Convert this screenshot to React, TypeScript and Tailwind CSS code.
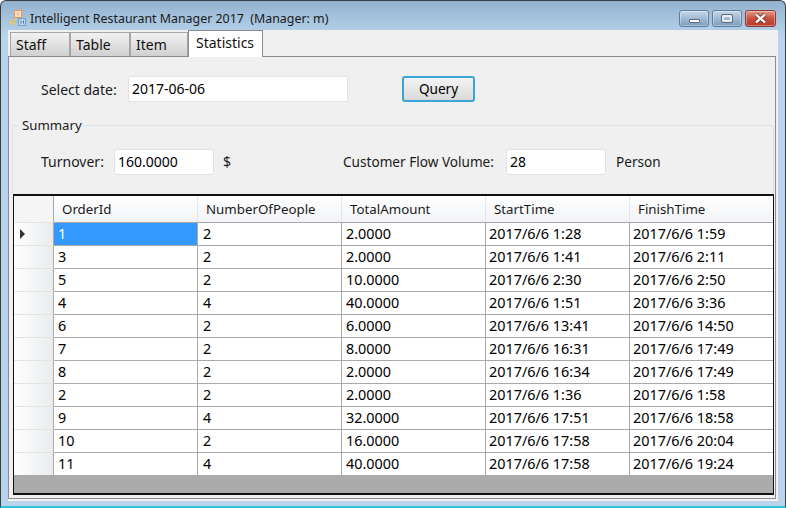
import React from "react";

const columns = ["OrderId", "NumberOfPeople", "TotalAmount", "StartTime", "FinishTime"];

const rows = [
  ["1", "2", "2.0000", "2017/6/6 1:28", "2017/6/6 1:59"],
  ["3", "2", "2.0000", "2017/6/6 1:41", "2017/6/6 2:11"],
  ["5", "2", "10.0000", "2017/6/6 2:30", "2017/6/6 2:50"],
  ["4", "4", "40.0000", "2017/6/6 1:51", "2017/6/6 3:36"],
  ["6", "2", "6.0000", "2017/6/6 13:41", "2017/6/6 14:50"],
  ["7", "2", "8.0000", "2017/6/6 16:31", "2017/6/6 17:49"],
  ["8", "2", "2.0000", "2017/6/6 16:34", "2017/6/6 17:49"],
  ["2", "2", "2.0000", "2017/6/6 1:36", "2017/6/6 1:58"],
  ["9", "4", "32.0000", "2017/6/6 17:51", "2017/6/6 18:58"],
  ["10", "2", "16.0000", "2017/6/6 17:58", "2017/6/6 20:04"],
  ["11", "4", "40.0000", "2017/6/6 17:58", "2017/6/6 19:24"],
];

// left padding per column, the first three sit a bit further in
const cellPad = ["pl-[4px]", "pl-[5px]", "pl-[4px]", "pl-[3px]", "pl-[3px]"];

const AppIcon = () => (
  <svg width="17" height="18" viewBox="0 0 17 18" className="shrink-0">
    <rect x="5.5" y="0.5" width="7" height="7" fill="#f7e2d2" stroke="#ee9350" />
    <path d="M9 2.5v3" stroke="#ee9350" />
    <path d="M1.5 9v6M5.5 9v6" stroke="#f5c84a" strokeWidth="1.4" />
    <path d="M1.5 12h4" stroke="#f5c84a" />
    <rect x="9.5" y="8.5" width="7" height="7" fill="#bcd6ee" stroke="#6f9fd0" />
    <path d="M12 10.5v3M14.5 10.5v3" stroke="#3f74ad" />
    <path d="M6 12h3" stroke="#a9b6c4" />
  </svg>
);

const WindowButton = ({ children, className }: { children: React.ReactNode; className: string }) => (
  <div className={`flex h-[17px] items-center justify-center rounded-[3px] border shadow-[inset_0_0_0_1px_rgba(255,255,255,0.35)] ${className}`}>
    {children}
  </div>
);

const Tab = ({ label, active, className }: { label: string; active?: boolean; className?: string }) =>
  active ? (
    <div className="z-10 -mb-px flex h-[27px] w-[75px] items-start border border-b-0 border-[#898c95] bg-white pl-[7px] pt-[5px] text-[#111]">
      {label}
    </div>
  ) : (
    <div className={`mt-[2px] flex h-[24px] items-center border border-b-0 border-[#a5a5a5] bg-gradient-to-b from-[#f2f2f2] to-[#d0d0d0] pl-[5px] text-[#111] ${className}`}>
      {label}
    </div>
  );

const Field = ({ value, className }: { value: string; className: string }) => (
  <div className={`flex h-[26px] items-center rounded-[2px] border border-[#dfe3e8] bg-white pl-[3px] text-black ${className}`}>
    {value}
  </div>
);

export default function App() {
  return (
    <div
      className="flex h-[508px] w-[786px] flex-col overflow-hidden rounded-t-[6px] border border-b-2 border-[#3a3f46] border-b-[#2fc4d8] bg-gradient-to-b from-[#93b2cf] from-0% via-[#b9d4ec] via-[7%] to-[#b9d4ec] px-[7px] pb-[5px] text-[14px] leading-none text-[#1a1a1a]"
      style={{ fontFamily: '"Noto Sans", sans-serif' }}
    >
      <div className="flex h-[29px] shrink-0 items-center pt-[7px]">
        <div className="ml-[1px] flex items-center gap-[4px] text-[12.4px]">
          <AppIcon />
          <span className="whitespace-pre">Intelligent Restaurant Manager 2017  (Manager: m)</span>
        </div>
        <div className="ml-auto mr-[2px] flex items-center gap-[3px] self-start pt-[2px]">
          <WindowButton className="w-[30px] border-[#5f7d9c] bg-gradient-to-b from-[#c6d8ea] to-[#7c9cbc]">
            <div className="mt-[5px] h-[4px] w-[11px] rounded-[1px] border border-[#5a6878] bg-white" />
          </WindowButton>
          <WindowButton className="w-[30px] border-[#5f7d9c] bg-gradient-to-b from-[#c6d8ea] to-[#7c9cbc]">
            <div className="h-[7px] w-[10px] rounded-[1px] border-2 border-[#e8eef4] outline outline-1 outline-[#5a6878]" />
          </WindowButton>
          <WindowButton className="w-[31px] border-[#8a3a30] bg-gradient-to-b from-[#e29a8c] via-[#c9503e] to-[#b8392a]">
            <svg width="13" height="11" viewBox="0 0 13 11">
              <path d="M2 1.5l9 8M11 1.5l-9 8" stroke="#5a2a24" strokeWidth="4" />
              <path d="M2 1.5l9 8M11 1.5l-9 8" stroke="#f4f0ee" strokeWidth="2.5" />
            </svg>
          </WindowButton>
        </div>
      </div>

      <div className="flex min-h-0 flex-1 flex-col bg-[#f0f0f0] pb-[2px] pr-[2px]">
        <div className="flex h-[26px] shrink-0 pl-[2px]">
          <Tab label="Staff" className="w-[60px]" />
          <Tab label="Table" className="w-[60px]" />
          <Tab label="Item" className="w-[58px]" />
          <Tab label="Statistics" active />
        </div>

        <div className="flex min-h-0 flex-1 flex-col border border-[#898c95] bg-[#f0f0f0] pb-[3px] pl-[3px] pr-[1px] pt-[3px]">
          <div className="flex h-[55px] shrink-0 items-center pl-[29px] pt-[3px]">
            <span className="w-[87px] pt-[1px]">Select date:</span>
            <Field value="2017-06-06" className="w-[220px]" />
            <div className="ml-[54px] flex h-[26px] w-[73px] items-center justify-center rounded-[3px] border-2 border-[#3ba5d8] bg-gradient-to-b from-[#f4f4f4] to-[#dadada] text-[13.6px] text-black">
              Query
            </div>
          </div>

          <div className="relative mt-[10px] h-[69px] shrink-0 rounded-[2px] border border-b-0 border-[#dce2e8] pl-[28px] pt-[23px]">
            <span className="absolute -top-[7px] left-[6px] bg-[#f0f0f0] px-[3px] text-[13.2px]">Summary</span>
            <div className="flex items-center">
              <span className="w-[73px]">Turnover:</span>
              <Field value="160.0000" className="w-[100px]" />
              <span className="ml-[9px] w-[120px]">$</span>
              <span className="w-[163px] text-[13.6px]">Customer Flow Volume:</span>
              <Field value="28" className="w-[100px]" />
              <span className="ml-[10px] text-[13.6px]">Person</span>
            </div>
          </div>

          <div className="ml-[1px] flex min-h-0 flex-1 flex-col overflow-hidden border-x border-y-2 border-[#111] bg-[#ababab]">
            <div className="flex h-[26px] shrink-0 bg-gradient-to-b from-white to-[#f1f3f6] text-[13.3px]">
              <div className="w-[40px] shrink-0 border-r border-[#a9a9a9] bg-[#f5f5f5]" />
              {columns.map((c) => (
                <div key={c} className="flex w-[144px] shrink-0 items-center border-r border-[#e4e6ea] pl-[8px] pt-[1px] text-[#1a1a1a]">
                  {c}
                </div>
              ))}
            </div>
            {rows.map((row, i) => (
              <div key={row[0]} className="flex h-[23px] shrink-0 text-[14.4px]">
                <div className="flex w-[40px] shrink-0 items-center border-r border-t border-r-[#a9a9a9] border-t-[#e4e4e4] bg-gradient-to-r from-white to-[#e9ebed] pl-[6px]">
                  {i === 0 && (
                    <div className="h-0 w-0 border-y-[5px] border-l-[5px] border-y-transparent border-l-[#333]" />
                  )}
                </div>
                {row.map((cell, j) => (
                  <div
                    key={j}
                    className={`flex w-[144px] shrink-0 items-center border-r border-t border-[#a9a9a9] ${cellPad[j]} ${
                      i === 0 && j === 0 ? "bg-[#3399ff] text-white" : "bg-white text-black"
                    }`}
                  >
                    {cell}
                  </div>
                ))}
              </div>
            ))}
            <div className="border-t border-[#a9a9a9]" />
          </div>
        </div>
      </div>
    </div>
  );
}
